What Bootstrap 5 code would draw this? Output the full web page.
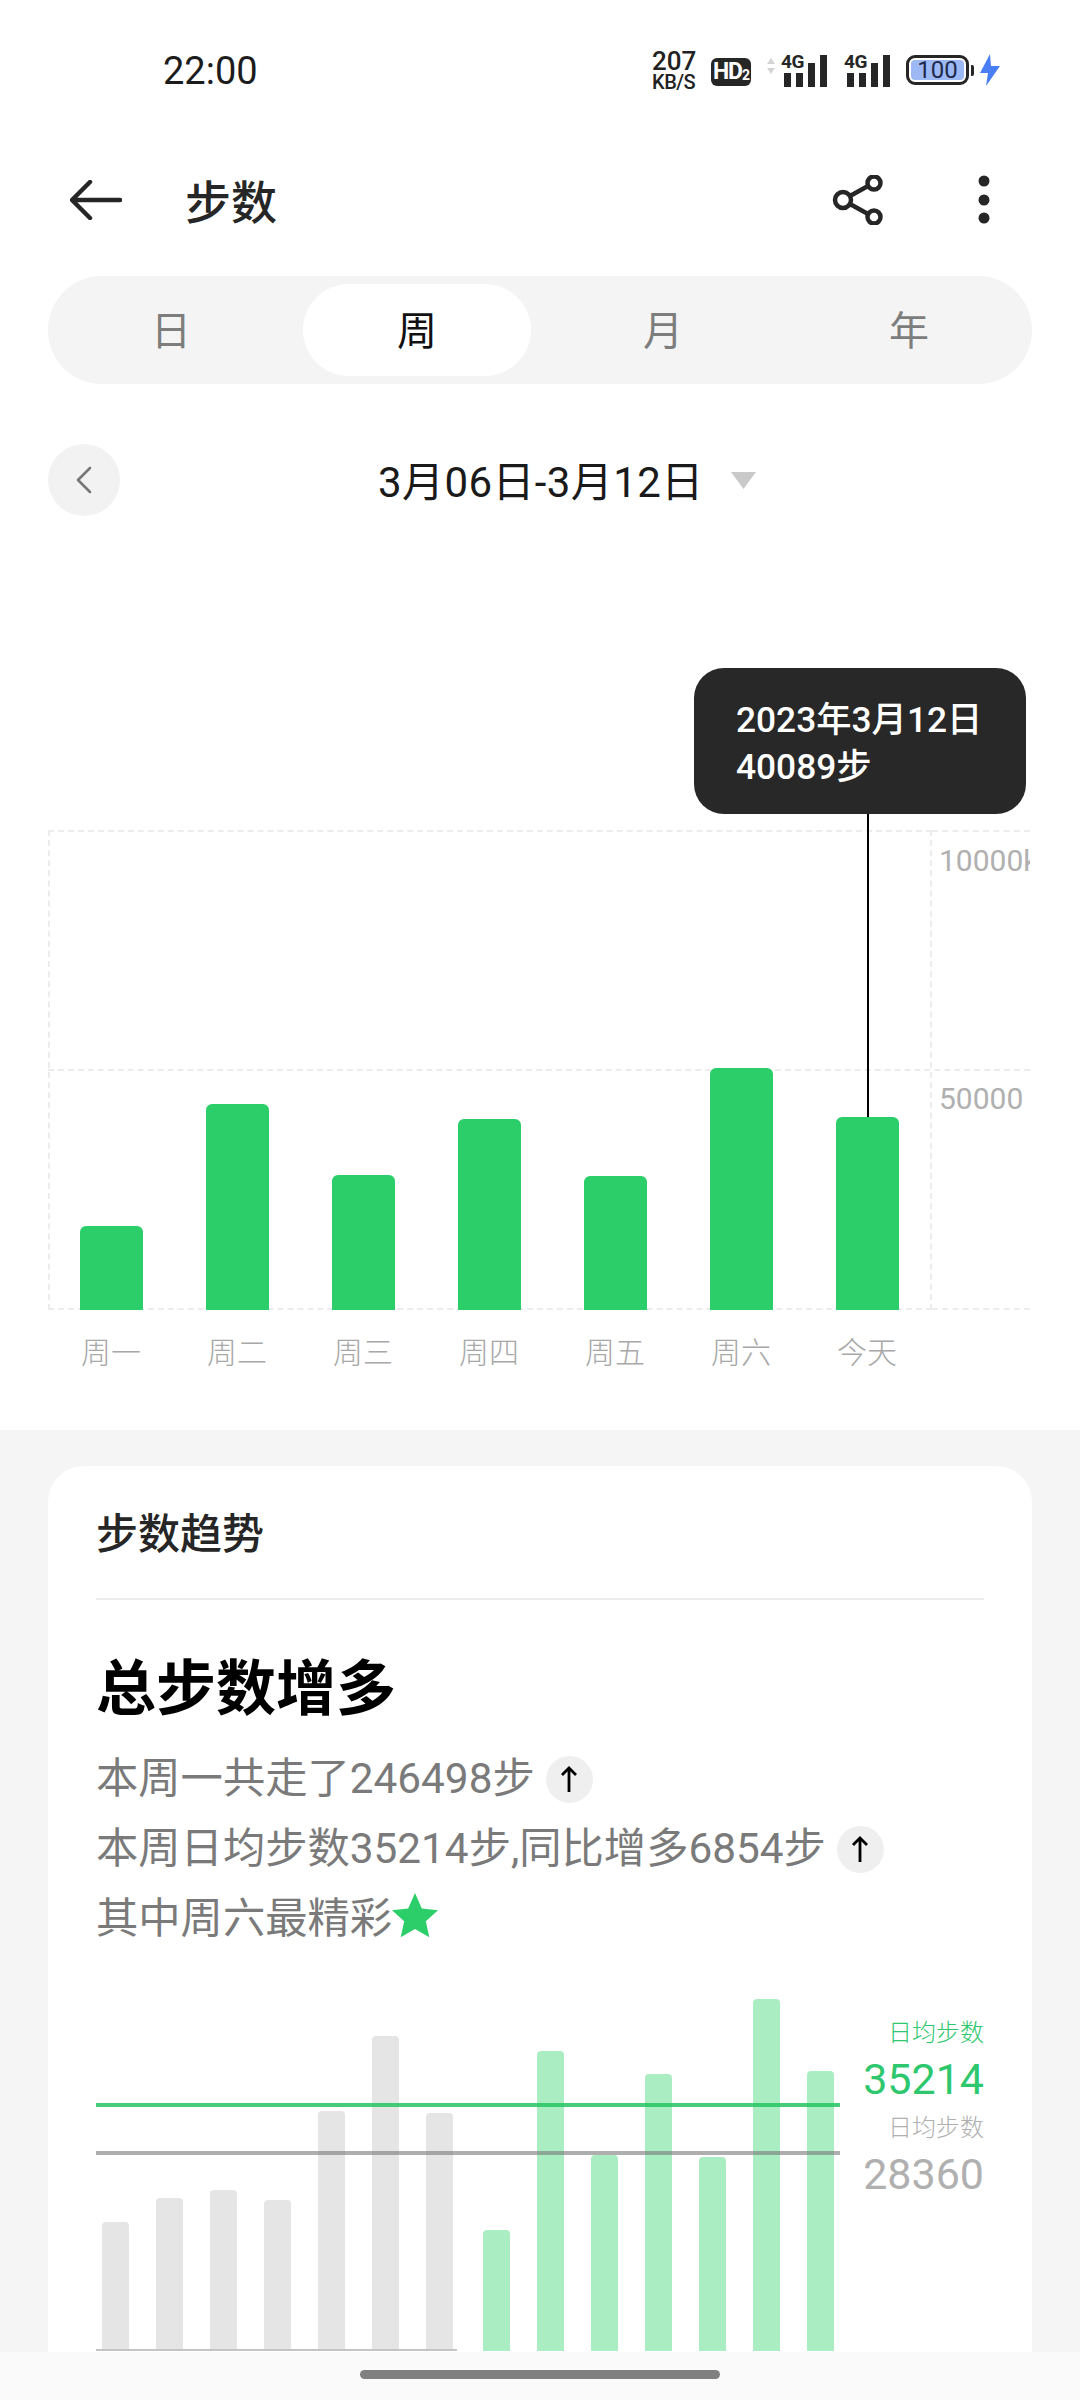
<!DOCTYPE html>
<html lang="zh">
<head>
    <title>步数</title>
    <meta charset="UTF-8">
    <meta name="viewport" content="width=device-width, initial-scale=1.0">
    <link href="https://cdn.jsdelivr.net/npm/bootstrap@5.3.3/dist/css/bootstrap.min.css" rel="stylesheet">
    <style>
        body { font-family: Roboto, "Noto Sans CJK SC", sans-serif; background: #fff; color: #262626; }
        .phone { width: 1080px; height: 2400px; overflow: hidden; position: relative; background: #fff; }

        /* status bar */
        .status-row { height: 140px; padding-left: 163px; padding-right: 80px; }
        .clock { font-size: 38px; line-height: 1; color: #1c1c1c; padding-top: 2px; }
        .speed { width: 43px; margin-right: 16px; text-align: center; line-height: 1; color: #222; font-weight: 500; padding-top: 2px; }
        .speed-num { font-size: 26px; height: 22px; line-height: 22px; }
        .speed-unit { font-size: 20px; letter-spacing: -.6px; white-space: nowrap; }
        .hd-tag { width: 40px; height: 28px; border-radius: 6px; background: #262626; color: #fff; font-size: 23px; font-weight: 700; line-height: 28px; text-align: center; margin-right: 15px; letter-spacing: -1px; white-space: nowrap; margin-top: 4px; }
        .hd-tag sub { font-size: 14px; bottom: -1px; position: relative; }
        .updown { margin-right: 5px; margin-bottom: 8px; }
        .sim-wrap { position: relative; width: 46px; height: 32px; margin-right: 17px; margin-top: 2px; }
        .sim-wrap svg { display: block; }
        .sim-tag { position: absolute; left: 0; top: -3px; font-size: 19px; font-weight: 700; line-height: 1; color: #262626; letter-spacing: -.5px; }
        .batt { width: 63px; height: 30px; border: 3px solid #262626; border-radius: 9px; padding: 2px; margin-left: -1px; }
        .batt-fill { height: 100%; background: #9db9f5; border-radius: 4px; font-size: 24px; line-height: 20px; text-align: center; color: #1d2a4a; }
        .batt-nub { width: 3px; height: 11px; background: #262626; border-radius: 0 2px 2px 0; margin-left: 2px; margin-right: 6px; }

        /* header */
        .head-row { height: 120px; margin-bottom: 16px; padding-left: 70px; padding-right: 90px; }
        .page-title { font-size: 46px; font-weight: 500; margin-left: 63px; line-height: 1; color: #262626; padding-top: 5px; }
        .share-icon { margin-right: 68px; }

        /* day/week/month/year switch */
        .range-switch { margin: 0 48px; height: 108px; background: #f4f4f4; border-radius: 54px; padding: 8px 0; }
        .range-item { width: 246px; display: flex; align-items: center; justify-content: center; font-size: 40px; color: #7d7d7d; margin: 0; padding-top: 3px; }
        .range-item.on { background: #fff; color: #111; border-radius: 46px; width: 228px; margin: 0 9px; }

        /* date row */
        .date-row { margin: 60px 48px 0; height: 72px; }
        .prev-round { width: 72px; height: 72px; background: #f2f2f2; }
        .date-text { font-size: 42px; line-height: 1; margin-left: 258px; color: #1a1a1a; letter-spacing: .4px; padding-top: 5px; }
        .date-caret { margin-left: 27px; }

        /* week chart */
        .week-chart { position: relative; height: 914px; padding: 314px 50px 0 48px; }
        .plot-wrap { position: relative; height: 480px; }
        .plot-main { width: 884px; height: 480px; border: 2px dashed #ececec; padding-left: 0; }
        .plot-axis { flex: 1; height: 480px; border-top: 2px dashed #ececec; border-bottom: 2px dashed #ececec; overflow: hidden; white-space: nowrap; }
        .axis-num { height: 238px; padding: 12px 0 0 7px; font-size: 30px; line-height: 34px; color: #b0b0b0; }
        .grid-mid { position: absolute; left: 0; right: 0; top: 239px; border-top: 2px dashed #ececec; }
        .bar-cell { width: 126px; display: flex; justify-content: center; align-items: flex-end; height: 100%; margin-bottom: -2px; }
        .bar-cell:first-child { margin-left: -2px; }
        .green-bar { width: 63px; background: #2bce68; border-radius: 6px 6px 0 0; position: relative; z-index: 1; }
        .green-bar.picked::before { content: ""; position: absolute; left: 31px; bottom: 100%; width: 2px; height: 303px; background: #000; }
        .day-row { margin-top: 26px; }
        .day-cell { width: 126px; text-align: center; font-size: 30px; line-height: 34px; color: #a8a8a8; font-weight: 300; }
        .tip-box { position: absolute; left: 694px; top: 152px; width: 332px; height: 146px; background: #282828; color: #fff; border-radius: 30px; padding: 29px 0 0 42px; font-size: 35.300px; line-height: 47px; font-weight: 500; z-index: 2; }

        /* lower section */
        .lower-zone { background: #f5f5f5; padding: 36px 48px 0; height: 970px; }
        .trend-card { border-radius: 36px; padding: 0 48px; height: 1000px; }
        .trend-title { height: 134px; border-bottom: 2px solid #ececec; font-size: 42px; font-weight: 500; color: #262626; display: flex; align-items: center; padding-top: 4px; }
        .trend-head { font-size: 60px; font-weight: 700; line-height: 84px; color: #000; margin: 48px 0 12px; }
        .trend-line { font-size: 42.300px; line-height: 70px; color: #7a7a7a; height: 70px; }
        .up-badge { width: 47px; height: 47px; background: #efefef; margin-left: 11px; }

        /* compare chart */
        .compare { position: relative; height: 397px; }
        .compare-bars { width: 744px; height: 397px; align-items: flex-end; }
        .thin-bar { width: 27px; margin-right: 27px; border-radius: 4px 4px 0 0; }
        .thin-bar:last-child { margin-right: 0; }
        .thin-gray { background: #e5e5e5; }
        .thin-green { background: #abedc3; }
        .bar-group { display: flex; flex: none; align-items: flex-end; height: 100%; }
        .gray-group { border-bottom: 2px solid #c4c4c4; padding-left: 6px; margin-right: 2px; width: 361px; }
        .avg-mark { position: absolute; left: 0; width: 744px; height: 4px; }
        .avg-green { top: 149px; background: rgba(36, 196, 96, .85); }
        .avg-gray { top: 197px; background: rgba(120, 120, 120, .6); }
        .compare-side { flex: 1; text-align: right; padding-top: 62px; }
        .side-label { font-size: 24px; line-height: 34px; font-weight: 300; }
        .side-num { font-size: 43px; line-height: 52px; margin-top: 3px; margin-bottom: 6px; }
        .tone-green { color: #2ec76e; }
        .tone-gray { color: #b0b0b0; }

        /* gesture bar */
        .gesture-bar { position: absolute; left: 0; right: 0; bottom: 0; height: 48px; background: #fafafa; z-index: 3; }
        .gesture-pill { width: 360px; height: 9px; background: #808080; border-radius: 5px; margin: 18px auto 0; }
    </style>
</head>
<body>
<div class="phone">

    <div class="status-row d-flex align-items-center">
        <div class="clock flex-grow-1">22:00</div>
        <div class="speed">
            <div class="speed-num">207</div>
            <div class="speed-unit">KB/S</div>
        </div>
        <div class="hd-tag">HD<sub>2</sub></div>
        <svg class="updown" width="10" height="16" viewBox="0 0 10 16"><path d="M5 0l4 6H1zM5 16l4-6H1z" fill="#d4d4d4"/></svg>
        <div class="sim-wrap">
            <span class="sim-tag">4G</span>
            <svg width="46" height="32" viewBox="0 0 46 32"><g fill="#262626"><rect x="3" y="18" width="7" height="14"/><rect x="15" y="18" width="7" height="14"/><rect x="27" y="8" width="7" height="24"/><rect x="39" y="0" width="7" height="32"/></g></svg>
        </div>
        <div class="sim-wrap">
            <span class="sim-tag">4G</span>
            <svg width="46" height="32" viewBox="0 0 46 32"><g fill="#262626"><rect x="3" y="18" width="7" height="14"/><rect x="15" y="18" width="7" height="14"/><rect x="27" y="8" width="7" height="24"/><rect x="39" y="0" width="7" height="32"/></g></svg>
        </div>
        <div class="batt"><div class="batt-fill">100</div></div>
        <div class="batt-nub"></div>
        <svg width="20" height="32" viewBox="0 0 20 32"><path d="M10 0L0 19h8L6 32 20 12h-9z" fill="#4a7ef5"/></svg>
    </div>

    <div class="head-row d-flex align-items-center">
        <svg width="52" height="40" viewBox="0 0 52 40" fill="none" stroke="#262626" stroke-width="4.500" stroke-linecap="round" stroke-linejoin="round"><path d="M50 20H3M20 2L2 20l18 18"/></svg>
        <div class="page-title flex-grow-1">步数</div>
        <svg class="share-icon" width="54" height="50" viewBox="0 0 54 50" fill="none" stroke="#262626" stroke-width="4.500"><circle cx="11" cy="25" r="8"/><circle cx="42" cy="8" r="6.500"/><circle cx="42" cy="42" r="6.500"/><path d="M18 21L36 11M18 29l18 10"/></svg>
        <svg width="12" height="50" viewBox="0 0 12 50" fill="#262626" class="ms-4"><circle cx="6" cy="6" r="5.500"/><circle cx="6" cy="25" r="5.500"/><circle cx="6" cy="43" r="5.500"/></svg>
    </div>

    <div class="range-switch d-flex">
        <div class="range-item">日</div>
        <div class="range-item on">周</div>
        <div class="range-item">月</div>
        <div class="range-item">年</div>
    </div>

    <div class="date-row d-flex align-items-center">
        <div class="prev-round rounded-circle d-flex align-items-center justify-content-center">
            <svg width="18" height="28" viewBox="0 0 18 28" fill="none" stroke="#777" stroke-width="2.600" stroke-linecap="round" stroke-linejoin="round"><path d="M15 2L3 14l12 12"/></svg>
        </div>
        <div class="date-text">3月06日-3月12日</div>
        <svg class="date-caret" width="25" height="17" viewBox="0 0 25 17"><path d="M0 0h25L12.500 17z" fill="#c9c9c9"/></svg>
    </div>

    <div class="week-chart">
        <div class="plot-wrap">
            <div class="d-flex">
                <div class="plot-main d-flex align-items-end">
                    <div class="bar-cell"><div class="green-bar" style="height:84px"></div></div>
                    <div class="bar-cell"><div class="green-bar" style="height:206px"></div></div>
                    <div class="bar-cell"><div class="green-bar" style="height:135px"></div></div>
                    <div class="bar-cell"><div class="green-bar" style="height:191px"></div></div>
                    <div class="bar-cell"><div class="green-bar" style="height:134px"></div></div>
                    <div class="bar-cell"><div class="green-bar" style="height:242px"></div></div>
                    <div class="bar-cell"><div class="green-bar picked" style="height:193px"></div></div>
                </div>
                <div class="plot-axis">
                    <div class="axis-num">10000k</div>
                    <div class="axis-num">50000</div>
                </div>
            </div>
            <div class="grid-mid"></div>
        </div>
        <div class="day-row d-flex">
            <div class="day-cell">周一</div>
            <div class="day-cell">周二</div>
            <div class="day-cell">周三</div>
            <div class="day-cell">周四</div>
            <div class="day-cell">周五</div>
            <div class="day-cell">周六</div>
            <div class="day-cell">今天</div>
        </div>
        <div class="tip-box">2023年3月12日<br>40089步</div>
    </div>

    <div class="lower-zone">
        <div class="card border-0 trend-card">
            <div class="trend-title">步数趋势</div>
            <div class="trend-head">总步数增多</div>
            <div class="trend-line d-flex align-items-center">本周一共走了246498步
                <span class="up-badge rounded-circle d-flex align-items-center justify-content-center">
                    <svg width="18" height="26" viewBox="0 0 18 26" fill="none" stroke="#000" stroke-width="2.800"><path d="M9 26V2M2 9l7-7 7 7"/></svg>
                </span>
            </div>
            <div class="trend-line d-flex align-items-center">本周日均步数35214步,同比增多6854步
                <span class="up-badge rounded-circle d-flex align-items-center justify-content-center">
                    <svg width="18" height="26" viewBox="0 0 18 26" fill="none" stroke="#000" stroke-width="2.800"><path d="M9 26V2M2 9l7-7 7 7"/></svg>
                </span>
            </div>
            <div class="trend-line d-flex align-items-center">其中周六最精彩
                <svg width="46" height="44" viewBox="0 0 46 44" class="mb-2"><path d="M23 0l6.800 15.600 16.200 1.600-12.200 11 3.500 16L23 36l-14.300 8.200 3.500-16L0 17.200l16.200-1.600z" fill="#2bce68"/></svg>
            </div>

            <div class="compare d-flex">
                <div class="compare-bars d-flex">
                    <div class="bar-group gray-group">
                        <div class="thin-bar thin-gray" style="height:127px"></div>
                        <div class="thin-bar thin-gray" style="height:151px"></div>
                        <div class="thin-bar thin-gray" style="height:159px"></div>
                        <div class="thin-bar thin-gray" style="height:149px"></div>
                        <div class="thin-bar thin-gray" style="height:238px"></div>
                        <div class="thin-bar thin-gray" style="height:313px"></div>
                        <div class="thin-bar thin-gray" style="height:236px"></div>
                    </div>
                    <div class="bar-group ms-4">
                        <div class="thin-bar thin-green" style="height:121px"></div>
                        <div class="thin-bar thin-green" style="height:300px"></div>
                        <div class="thin-bar thin-green" style="height:196px"></div>
                        <div class="thin-bar thin-green" style="height:277px"></div>
                        <div class="thin-bar thin-green" style="height:194px"></div>
                        <div class="thin-bar thin-green" style="height:352px"></div>
                        <div class="thin-bar thin-green" style="height:280px"></div>
                    </div>
                </div>
                <div class="avg-mark avg-green"></div>
                <div class="avg-mark avg-gray"></div>
                <div class="compare-side">
                    <div class="side-label tone-green">日均步数</div>
                    <div class="side-num tone-green">35214</div>
                    <div class="side-label tone-gray">日均步数</div>
                    <div class="side-num tone-gray">28360</div>
                </div>
            </div>
        </div>
    </div>

    <div class="gesture-bar"><div class="gesture-pill"></div></div>
</div>
<script src="https://cdn.jsdelivr.net/npm/bootstrap@5.3.3/dist/js/bootstrap.bundle.min.js"></script>
</body>
</html>
